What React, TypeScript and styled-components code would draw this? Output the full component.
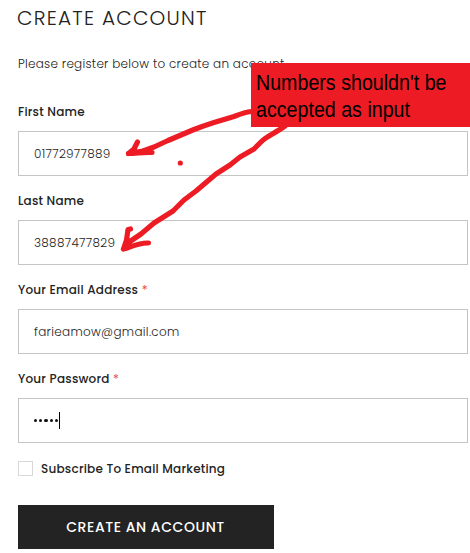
import React from "react";
import styled, { createGlobalStyle } from "styled-components";

const GlobalStyle = createGlobalStyle`
  * { box-sizing: border-box; }
  html, body { margin: 0; background: #fff; overflow: hidden; }
  body {
    color: #232323;
    font-family: Poppins, Inter, "Open Sans", sans-serif;
    font-feature-settings: "cv11", "calt" 0;
    font-size: 12px;
    letter-spacing: 0.02em;
  }
`;

const Page = styled.main`
  position: relative;
  width: 470px;
  height: 553px;
  padding: 3px 2px 0 18px;
  overflow: hidden;
  white-space: nowrap;
`;

const Title = styled.h1`
  margin: 0 0 0 -1px;
  height: 30px;
  font-size: 20px;
  line-height: 30px;
  font-weight: 300;
  letter-spacing: 1.25px;
`;

const Intro = styled.p`
  margin: 21px 0 0;
  height: 20px;
  line-height: 20px;
  font-weight: 300;
  letter-spacing: 0.26px;
`;

const Form = styled.form`
  display: flex;
  flex-direction: column;
  align-items: flex-start;
  padding-top: 28px;
`;

const Field = styled.div`
  width: 100%;
  height: 89px;
`;

const Label = styled.label`
  display: block;
  height: 20px;
  line-height: 20px;
  font-weight: 500;
  letter-spacing: 0.22px;
`;

const Required = styled.span`
  color: #e95144;
  font-weight: 400;
`;

const InputBox = styled.div`
  display: flex;
  align-items: center;
  height: 45px;
  margin-top: 9px;
  padding-left: 15px;
  border: 1px solid #c4c4c4;
  font-weight: 300;
  letter-spacing: 0.3px;
`;

const Bullets = styled.div`
  display: flex;
  gap: 2px;
`;

const Bullet = styled.span`
  width: 3.2px;
  height: 3.2px;
  border-radius: 50%;
  background: #111;
`;

const Caret = styled.span`
  width: 1px;
  height: 17px;
  margin-left: 1px;
  background: #000;
`;

const CheckRow = styled.label`
  display: flex;
  align-items: center;
  gap: 8px;
  height: 15px;
  margin-top: 3px;
  font-weight: 500;
  letter-spacing: 0.22px;
`;

const CheckBox = styled.span`
  width: 15px;
  height: 15px;
  border: 1px solid #d8d8d8;
`;

const Submit = styled.button`
  width: 256px;
  height: 44px;
  margin-top: 29px;
  padding: 0 1px 0 0;
  border: 0;
  background: #232323;
  color: #fff;
  font: inherit;
  font-size: 14px;
  font-weight: 500;
  letter-spacing: 0.55px;
`;

const Marks = styled.svg`
  position: absolute;
  left: 0;
  top: 0;
  pointer-events: none;
`;

const Note = styled.aside`
  position: absolute;
  left: 251px;
  top: 63px;
  width: 219px;
  height: 64px;
  padding: 6px 0 0 5px;
  background: #ed1c24;
  color: #000;
  font: 22px/27px "Liberation Sans", Arial, sans-serif;
  letter-spacing: 0;
`;

const NoteLine = styled.div`
  transform: scaleX(0.893);
  transform-origin: left;
`;

const fields = [
  { label: "First Name", value: "01772977889" },
  { label: "Last Name", value: "38887477829" },
  { label: "Your Email Address", value: "farieamow@gmail.com", required: true },
];

export default function App() {
  return (
    <>
      <GlobalStyle />
      <Page>
        <Title>CREATE ACCOUNT</Title>
        <Intro>Please register below to create an account</Intro>
        <Form>
          {fields.map((f) => (
            <Field key={f.label}>
              <Label>
                {f.label}
                {f.required && <Required> *</Required>}
              </Label>
              <InputBox>{f.value}</InputBox>
            </Field>
          ))}
          <Field>
            <Label>
              Your Password<Required> *</Required>
            </Label>
            <InputBox>
              <Bullets>
                {[0, 1, 2, 3, 4].map((i) => (
                  <Bullet key={i} />
                ))}
              </Bullets>
              <Caret />
            </InputBox>
          </Field>
          <CheckRow>
            <CheckBox />
            Subscribe To Email Marketing
          </CheckRow>
          <Submit type="button">CREATE AN ACCOUNT</Submit>
        </Form>
        <Marks width="470" height="553" fill="none" stroke="#ed1c24" strokeWidth="5.2" strokeLinecap="round" strokeLinejoin="round">
          <path d="M253 111.5C246 111.5 240 114 234 116.500L214 122.500Q203 126 194 129.500L181 135L168 140.500L154 147L143 151L128.500 153.500L134 149L137.500 142" />
          <path d="M128.500 153.500C137 153.500 142 152 152 152.500M142 151.500L150 149.500" />
          <path d="M285 126L279 130C271 135 266 137 262 141L254 149L240 157L230 165L216 174L196 191L184 200L173 211L154 223L141 234L127 243.500" />
          <path d="M130.500 229L128 229.500L126.500 240L123.500 249C130 248 137 242.500 148.500 243M123.500 249L130 242" />
          <path d="M125 247L128 241" strokeWidth="6" />
          <circle cx="180.300" cy="163" r="2.600" fill="#ed1c24" stroke="none" />
        </Marks>
        <Note>
          <NoteLine>Numbers shouldn't be</NoteLine>
          <NoteLine>accepted as input</NoteLine>
        </Note>
      </Page>
    </>
  );
}
